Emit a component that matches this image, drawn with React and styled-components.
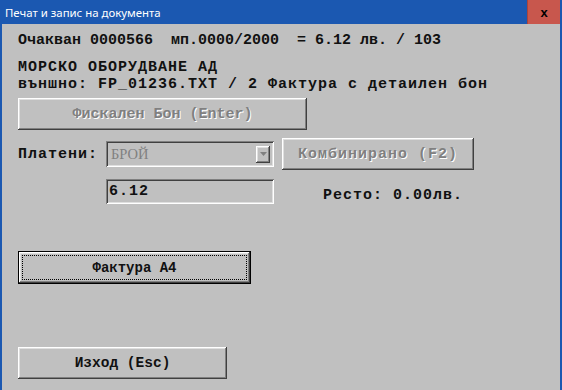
import React from 'react'
import styled, { createGlobalStyle, css } from 'styled-components'

const GlobalStyle = createGlobalStyle`
  html, body {
    margin: 0;
    padding: 0;
    background: #c0c0c0;
  }
  #root {
    width: 562px;
    height: 390px;
    overflow: hidden;
  }
`

const Window = styled.div`
  width: 562px;
  height: 390px;
  display: flex;
  flex-direction: column;
  background: #c0c0c0;
`

const TitleBar = styled.div`
  height: 24px;
  flex: none;
  display: flex;
  align-items: center;
  justify-content: space-between;
  background: #1b58b1;
  padding: 0 2px 0 5px;
`

const TitleText = styled.span`
  color: #ffffff;
  font-family: "Noto Sans", "Open Sans", sans-serif;
  font-size: 11.4px;
`

const CloseButton = styled.div`
  width: 33px;
  height: 24px;
  box-sizing: border-box;
  background: #c8574d;
  border-left: 1px solid #a8443d;
  display: flex;
  align-items: center;
  justify-content: center;
  color: #000;
  font-family: "Liberation Sans", sans-serif;
  font-weight: bold;
  font-size: 13px;
`

// wide mono text: 10px per character like the original Courier 12pt
const wide = css`
  font-size: 15px;
  letter-spacing: 1px;
`

const Body = styled.div`
  flex: 1;
  border-left: 2px solid #1b58b1;
  border-right: 2px solid #1b58b1;
  padding: 9px 16px 0 16px;
  font-family: "Liberation Mono", monospace;
  font-weight: bold;
  color: #111;
  ${wide};
`

const Line = styled.div`
  line-height: 17px;
  white-space: pre;
  margin-top: ${p => p.gap || 0}px;
`

const SmallLine = styled.div`
  font-size: 15px;
  letter-spacing: 0;
  line-height: 16px;
  white-space: pre;
`

const raised = css`
  box-shadow: inset -1px -1px #404040, inset 1px 1px #ffffff,
    inset -2px -2px #808080, inset 2px 2px #dfdfdf;
`

const sunken = css`
  box-shadow: inset 1px 1px #808080, inset -1px -1px #ffffff,
    inset 2px 2px #404040, inset -2px -2px #dfdfdf;
`

const Button = styled.div`
  position: relative;
  box-sizing: border-box;
  width: ${p => p.w}px;
  height: ${p => p.h || 32}px;
  margin-top: ${p => p.top || 0}px;
  margin-left: ${p => p.left || 0}px;
  background: #c0c0c0;
  display: flex;
  align-items: center;
  justify-content: center;
  font-family: "Liberation Mono", monospace;
  font-weight: bold;
  font-size: ${p => p.size || 15}px;
  letter-spacing: ${p => (p.wide ? 1 : 0)}px;
  white-space: pre;
  color: ${p => (p.disabled ? '#808080' : '#111')};
  text-shadow: ${p => (p.disabled ? '1px 1px #ffffff' : 'none')};
  ${raised};
  ${p =>
    p.focused &&
    css`
      border: 1px solid #000;
      &::after {
        content: '';
        position: absolute;
        inset: 3px;
        border: 1px dotted #000;
      }
    `}
`

const Row = styled.div`
  display: flex;
  align-items: center;
  margin-top: ${p => p.top || 0}px;
`

const Label = styled.span`
  width: 88px;
  flex: none;
`

const Combo = styled.div`
  box-sizing: border-box;
  width: 168px;
  height: 26px;
  padding: 4px 4px 4px 5px;
  display: flex;
  align-items: center;
  ${sunken};
`

const ComboText = styled.span`
  flex: 1;
  font-family: "Liberation Serif", serif;
  font-weight: normal;
  font-size: 14.5px;
  letter-spacing: 0;
  color: #808080;
`

const ComboArrow = styled.div`
  width: 14px;
  height: 17px;
  box-sizing: border-box;
  display: flex;
  align-items: center;
  justify-content: center;
  ${raised};
`

const Field = styled.div`
  box-sizing: border-box;
  width: 168px;
  height: 25px;
  margin-left: 88px;
  padding: 0 3px;
  display: flex;
  align-items: center;
  ${sunken};
`

const Change = styled.span`
  margin-left: 49px;
  margin-top: 9px;
`

const App = () => {
  return (
    <Window>
      <GlobalStyle />
      <TitleBar>
        <TitleText>Печат и запис на документа</TitleText>
        <CloseButton>x</CloseButton>
      </TitleBar>
      <Body>
        <SmallLine>Очакван 0000566  мп.0000/2000  = 6.12 лв. / 103</SmallLine>
        <Line gap={10}>МОРСКО ОБОРУДВАНЕ АД</Line>
        <Line>външно: FP_01236.TXT / 2 Фактура с детаилен бон</Line>

        <Button w={289} top={5} disabled>Фискален Бон (Enter)</Button>

        <Row top={8}>
          <Label>Платени:</Label>
          <Combo>
            <ComboText>БРОЙ</ComboText>
            <ComboArrow>
              <svg width="7" height="4" viewBox="0 0 7 4">
                <path d="M0 0 H7 L3.5 4 Z" fill="#808080" />
              </svg>
            </ComboArrow>
          </Combo>
          <Button w={192} left={8} wide disabled>Комбинирано (F2)</Button>
        </Row>

        <Row top={8}>
          <Field>6.12</Field>
          <Change>Ресто: 0.00лв.</Change>
        </Row>

        <Button w={233} h={33} top={47} size={14} focused>Фактура А4</Button>

        <Button w={209} top={63} size={14.5}>Изход (Esc)</Button>
      </Body>
    </Window>
  )
}

export default App
